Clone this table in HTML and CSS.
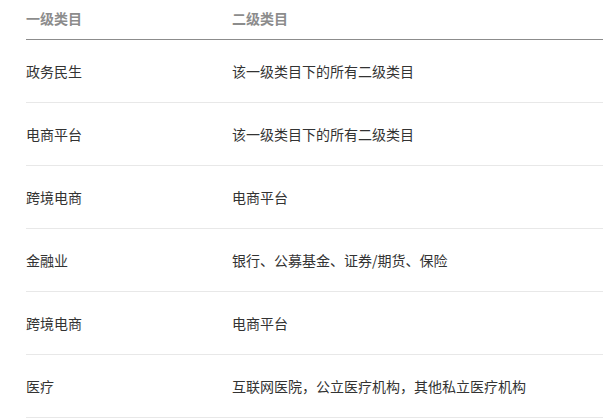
FILE: index.html
```html
<!DOCTYPE html>
<html lang="zh">
<head>
<meta charset="utf-8">
<link rel="stylesheet" href="styles.css">
</head>
<body>
<div class="wrap">
<table class="cat-table">
<thead>
<tr><th class="col1">一级类目</th><th>二级类目</th></tr>
</thead>
<tbody>
<tr><td>政务民生</td><td>该一级类目下的所有二级类目</td></tr>
<tr><td>电商平台</td><td>该一级类目下的所有二级类目</td></tr>
<tr><td>跨境电商</td><td>电商平台</td></tr>
<tr><td>金融业</td><td>银行、公募基金、证券/期货、保险</td></tr>
<tr><td>跨境电商</td><td>电商平台</td></tr>
<tr><td>医疗</td><td>互联网医院，公立医疗机构，其他私立医疗机构</td></tr>
</tbody>
</table>
</div>
</body>
</html>
```
FILE: styles.css
```css
html, body {
  margin: 0;
  padding: 0;
  background: #fff;
}
.wrap {
  padding-left: 26px;
}
.cat-table {
  width: 100%;
  border-collapse: collapse;
  font-family: "Noto Sans CJK SC", "Microsoft YaHei", sans-serif;
  font-size: 14px;
  line-height: 20px;
  color: #333;
}
.cat-table th {
  text-align: left;
  font-weight: 600;
  color: #8c8c8c;
  padding: 8px 0 11px 0;
  border-bottom: 1px solid #8c8c8c;
}
.cat-table th.col1 {
  width: 206px;
}
.cat-table td {
  padding: 21px 0 21px 0;
  border-bottom: 1px solid #e8e8e8;
  text-align: left;
}
```
